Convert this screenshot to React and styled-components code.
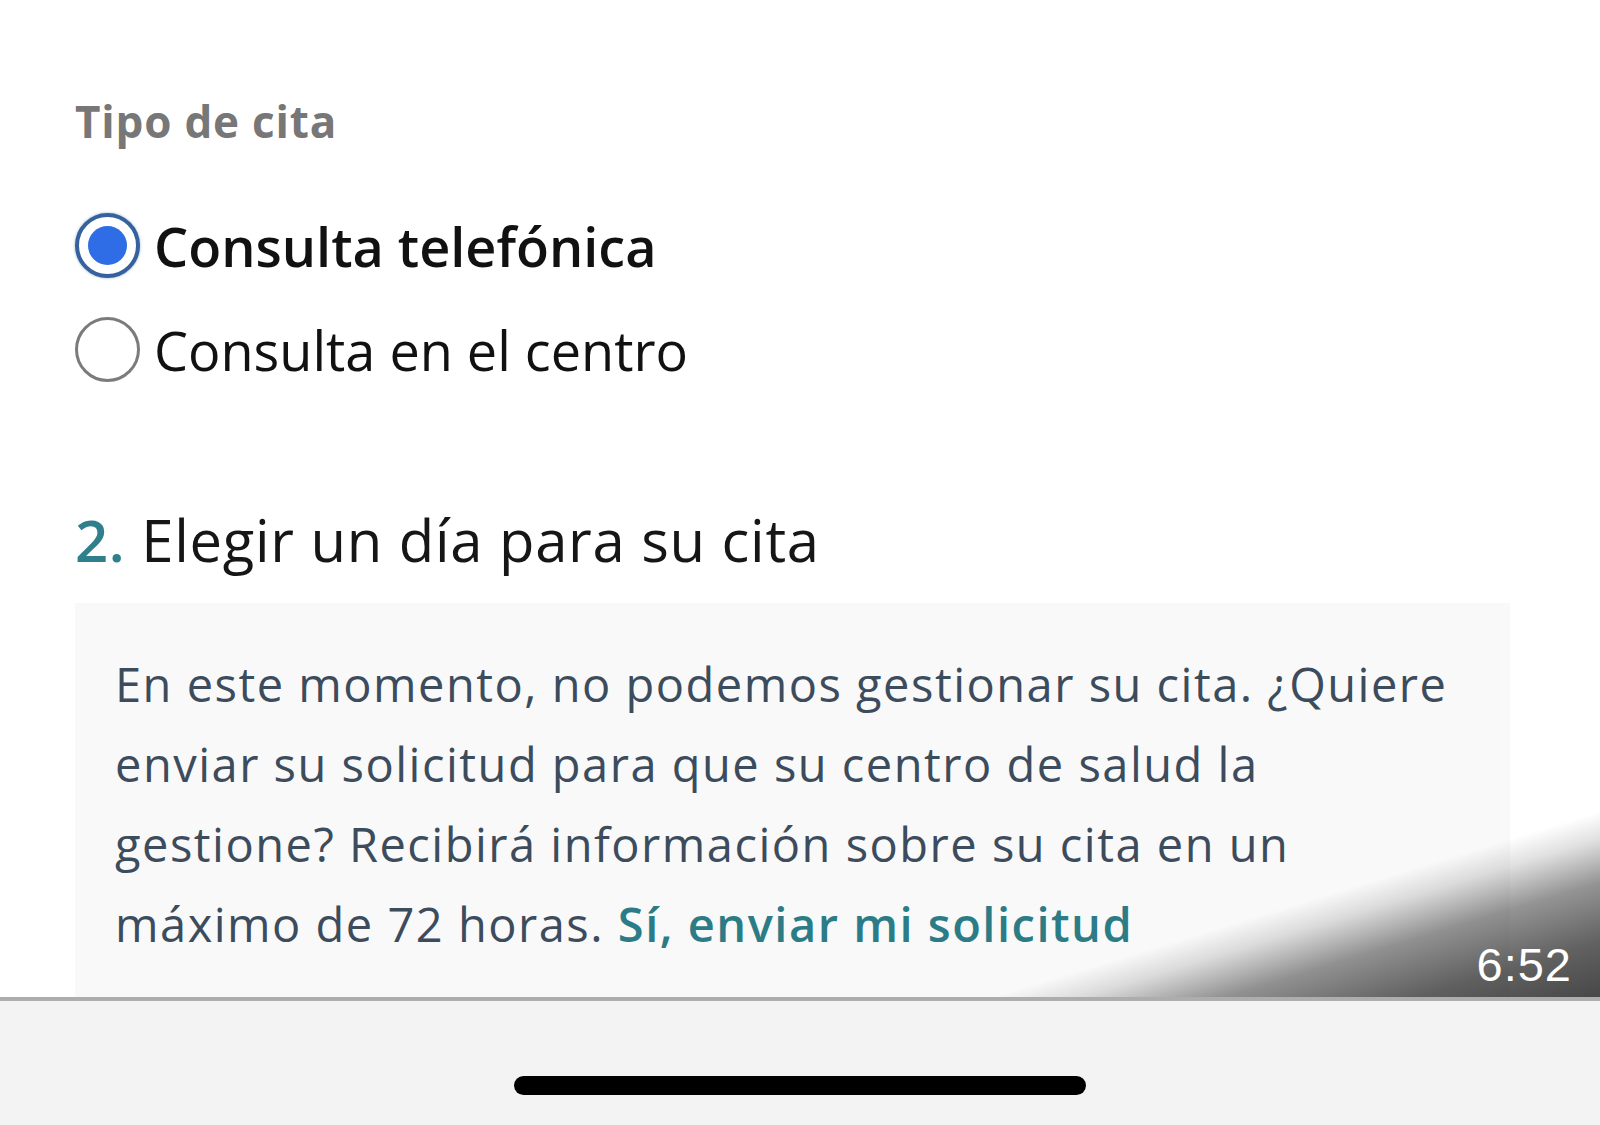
import React from "react";
import styled, { createGlobalStyle } from "styled-components";

const GlobalStyle = createGlobalStyle`
  html, body {
    margin: 0;
    padding: 0;
    background: #ffffff;
  }
  body {
    font-family: "Open Sans", "Noto Sans", sans-serif;
  }
`;

const Page = styled.div`
  width: 1600px;
  height: 1125px;
  display: flex;
  flex-direction: column;
  overflow: hidden;
`;

const Screen = styled.main`
  position: relative;
  height: 997px;
  overflow: hidden;
  background: #ffffff;
  padding: 99px 90px 0 75px;
  box-sizing: border-box;
`;

const FieldLabel = styled.div`
  font-size: 44px;
  line-height: 1;
  font-weight: 700;
  letter-spacing: 0.8px;
  color: #777777;
`;

const RadioList = styled.div`
  display: flex;
  flex-direction: column;
  gap: 39px;
  margin-top: 70px;
`;

const RadioRow = styled.label`
  display: flex;
  align-items: center;
  gap: 14px;
  height: 65px;
`;

const RadioCircle = styled.span`
  flex: none;
  width: 65px;
  height: 65px;
  box-sizing: border-box;
  border-radius: 50%;
  display: flex;
  align-items: center;
  justify-content: center;
  background: #ffffff;
  border: ${(p) => (p.checked ? "4px solid #35619f" : "3px solid #7b7b7b")};
  box-shadow: ${(p) => (p.checked ? "0 0 3px rgba(53, 97, 159, 0.5)" : "none")};
`;

const RadioDot = styled.span`
  width: 39px;
  height: 39px;
  border-radius: 50%;
  background: #2f6de6;
`;

const RadioText = styled.span`
  font-size: 54px;
  line-height: 1;
  font-weight: ${(p) => (p.checked ? 600 : 400)};
  color: #111111;
`;

const StepTitle = styled.h2`
  margin: 129px 0 0;
  font-size: 58px;
  line-height: 1;
  font-weight: 400;
  letter-spacing: 0.7px;
  color: #161616;
`;

const StepNumber = styled.span`
  color: #2f7f8c;
  font-weight: 600;
`;

const Notice = styled.div`
  margin-top: 34px;
  width: 1435px;
  background: #f9f9fa;
  padding: 41px 50px 60px 40px;
  box-sizing: border-box;
`;

const NoticeText = styled.p`
  margin: 0;
  font-size: 47px;
  line-height: 80px;
  letter-spacing: 1.5px;
  color: #3c4c5c;
`;

const NoticeLink = styled.a`
  color: #2b7c86;
  font-weight: 600;
  text-decoration: none;
`;

const Shade = styled.div`
  position: absolute;
  right: 0;
  bottom: 0;
  width: 640px;
  height: 200px;
  background: linear-gradient(
    163deg,
    rgba(0, 0, 0, 0) 0%,
    rgba(0, 0, 0, 0) 53%,
    rgba(0, 0, 0, 0.12) 60%,
    rgba(0, 0, 0, 0.42) 71%,
    rgba(0, 0, 0, 0.62) 86%,
    rgba(0, 0, 0, 0.72) 100%
  );
  display: flex;
  align-items: flex-end;
  justify-content: flex-end;
  padding: 0 28px 9px 0;
  box-sizing: border-box;
  pointer-events: none;
`;

const Clock = styled.span`
  font-family: "Liberation Sans", Arial, sans-serif;
  font-size: 47px;
  line-height: 1;
  color: #ffffff;
  letter-spacing: 1px;
`;

const Divider = styled.div`
  height: 4px;
  background: #adadad;
`;

const BottomBar = styled.div`
  flex: 1;
  background: #f3f3f3;
  display: flex;
  justify-content: center;
  padding-top: 75px;
  box-sizing: border-box;
`;

const HomeIndicator = styled.div`
  width: 572px;
  height: 19px;
  border-radius: 10px;
  background: #000000;
`;

const options = [
  { id: "tel", label: "Consulta telefónica", checked: true },
  { id: "centro", label: "Consulta en el centro", checked: false },
];

export default function App() {
  return (
    <Page>
      <GlobalStyle />
      <Screen>
        <FieldLabel>Tipo de cita</FieldLabel>
        <RadioList>
          {options.map((o) => (
            <RadioRow key={o.id}>
              <RadioCircle checked={o.checked}>
                {o.checked && <RadioDot />}
              </RadioCircle>
              <RadioText checked={o.checked}>{o.label}</RadioText>
            </RadioRow>
          ))}
        </RadioList>
        <StepTitle>
          <StepNumber>2.</StepNumber> Elegir un día para su cita
        </StepTitle>
        <Notice>
          <NoticeText>
            En este momento, no podemos gestionar su cita. ¿Quiere enviar su
            solicitud para que su centro de salud la gestione? Recibirá
            información sobre su cita en un máximo de 72 horas.{" "}
            <NoticeLink href="#">Sí, enviar mi solicitud</NoticeLink>
          </NoticeText>
        </Notice>
        <Shade>
          <Clock>6:52</Clock>
        </Shade>
      </Screen>
      <Divider />
      <BottomBar>
        <HomeIndicator />
      </BottomBar>
    </Page>
  );
}
